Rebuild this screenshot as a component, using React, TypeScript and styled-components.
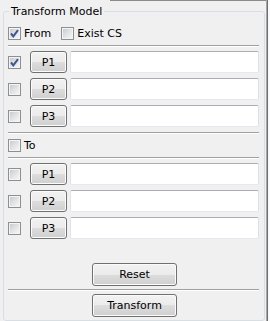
import React from "react";
import styled, { createGlobalStyle } from "styled-components";

const Global = createGlobalStyle`
  html, body { margin: 0; padding: 0; background: #f0f0f0; }
  body {
    font-family: "DejaVu Sans", Tahoma, sans-serif;
    font-size: 11px;
    color: #000;
  }
  * { box-sizing: border-box; }
`;

const Window = styled.div`
  width: 270px;
  height: 321px;
  display: flex;
  overflow: hidden;
  background: #f0f0f0;
`;

const Main = styled.div`
  width: 266px;
  display: flex;
  flex-direction: column;
`;

const TopEdge = styled.div`
  display: flex;
  height: 1px;
  flex: none;
`;

const TopLine = styled.div`
  margin-left: 110px;
  flex: 1;
  background: #8a8a8a;
`;

const RightEdge = styled.div`
  width: 4px;
  flex: none;
  background: linear-gradient(to right, #a8a8a8 0 1px, #6e6e6e 1px 2px, #fafafa 2px);
`;

const Group = styled.fieldset`
  margin: 4px 0 0 3px;
  width: 262px;
  height: 340px;
  min-width: 0;
  padding: 7px 5px 0 4px;
  border: 1px solid #d5dfe5;
  border-radius: 3px;
  display: flex;
  flex-direction: column;
`;

const Title = styled.legend`
  margin-left: 1px;
  padding: 0 2px;
  line-height: 13px;
  font-size: 11px;
`;

const OptionRow = styled.div`
  display: flex;
  align-items: center;
  height: 17px;
  gap: 10px;
`;

const CheckLabel = styled.label`
  display: inline-flex;
  align-items: center;
  gap: 3px;
  line-height: 13px;
`;

const Box = styled.span<{ $checked?: boolean }>`
  width: 13px;
  height: 13px;
  flex: none;
  border: 1px solid #8e8f8f;
  box-shadow: inset 0 0 0 1px #f4f4f4;
  background: linear-gradient(135deg, #c3c6cb 0%, #e4e5e7 55%, #f8f8f8 100%);
  display: flex;
  align-items: center;
  justify-content: center;
`;

const Separator = styled.div<{ $top: number; $bottom: number }>`
  height: 2px;
  flex: none;
  border-top: 1px solid #a0a0a0;
  border-bottom: 1px solid #ffffff;
  margin-top: ${(p) => p.$top}px;
  margin-bottom: ${(p) => p.$bottom}px;
`;

const Rows = styled.div`
  display: flex;
  flex-direction: column;
  gap: 5px;
`;

const PointRow = styled.div`
  display: flex;
  align-items: center;
  height: 22px;
`;

const Button = styled.button<{ $w: number; $h: number }>`
  width: ${(p) => p.$w}px;
  height: ${(p) => p.$h}px;
  flex: none;
  padding: 0;
  font: inherit;
  color: #000;
  border: 1px solid #707070;
  border-radius: 3px;
  box-shadow: inset 0 0 0 1px #fbfbfb;
  background: linear-gradient(#f2f2f2 0%, #ebebeb 50%, #dddddd 50%, #cfcfcf 100%);
`;

const PointButton = styled(Button)`
  margin-left: 9px;
  margin-right: 3px;
`;

const Field = styled.input`
  flex: 1;
  min-width: 0;
  height: 22px;
  padding: 0 3px;
  font: inherit;
  background: #fff;
  border: 1px solid;
  border-color: #abadb3 #dbdfe6 #e3e9ef #e2e3ea;
  border-radius: 2px;
  outline: none;
`;

const ToRow = styled.div`
  display: flex;
  align-items: center;
  height: 21px;
  margin-top: 1px;
`;

const ActionRow = styled.div<{ $top: number }>`
  display: flex;
  justify-content: center;
  padding-left: 2px;
  margin-top: ${(p) => p.$top}px;
`;

const Check: React.FC<{ checked?: boolean }> = ({ checked }) => (
  <Box $checked={checked}>
    {checked && (
      <svg width="11" height="11" viewBox="0 0 11 11">
        <polyline
          points="2,5.5 4.3,8.3 9,2.2"
          fill="none"
          stroke="#3b5697"
          strokeWidth="2"
          strokeLinejoin="miter"
        />
      </svg>
    )}
  </Box>
);

const Point: React.FC<{ label: string; checked?: boolean }> = ({ label, checked }) => (
  <PointRow>
    <Check checked={checked} />
    <PointButton $w={37} $h={22}>{label}</PointButton>
    <Field />
  </PointRow>
);

export default function App() {
  return (
    <>
      <Global />
      <Window>
        <Main>
          <TopEdge>
            <TopLine />
          </TopEdge>
          <Group>
            <Title>Transform Model</Title>
            <OptionRow>
              <CheckLabel>
                <Check checked />
                From
              </CheckLabel>
              <CheckLabel>
                <Check />
                Exist CS
              </CheckLabel>
            </OptionRow>
            <Separator $top={3} $bottom={4} />
            <Rows>
              <Point label="P1" checked />
              <Point label="P2" />
              <Point label="P3" />
            </Rows>
            <Separator $top={5} $bottom={0} />
            <ToRow>
              <CheckLabel>
                <Check />
                To
              </CheckLabel>
            </ToRow>
            <Separator $top={1} $bottom={4} />
            <Rows>
              <Point label="P1" />
              <Point label="P2" />
              <Point label="P3" />
            </Rows>
            <ActionRow $top={24}>
              <Button $w={85} $h={23}>Reset</Button>
            </ActionRow>
            <Separator $top={3} $bottom={3} />
            <ActionRow $top={0}>
              <Button $w={85} $h={23}>Transform</Button>
            </ActionRow>
          </Group>
        </Main>
        <RightEdge />
      </Window>
    </>
  );
}
